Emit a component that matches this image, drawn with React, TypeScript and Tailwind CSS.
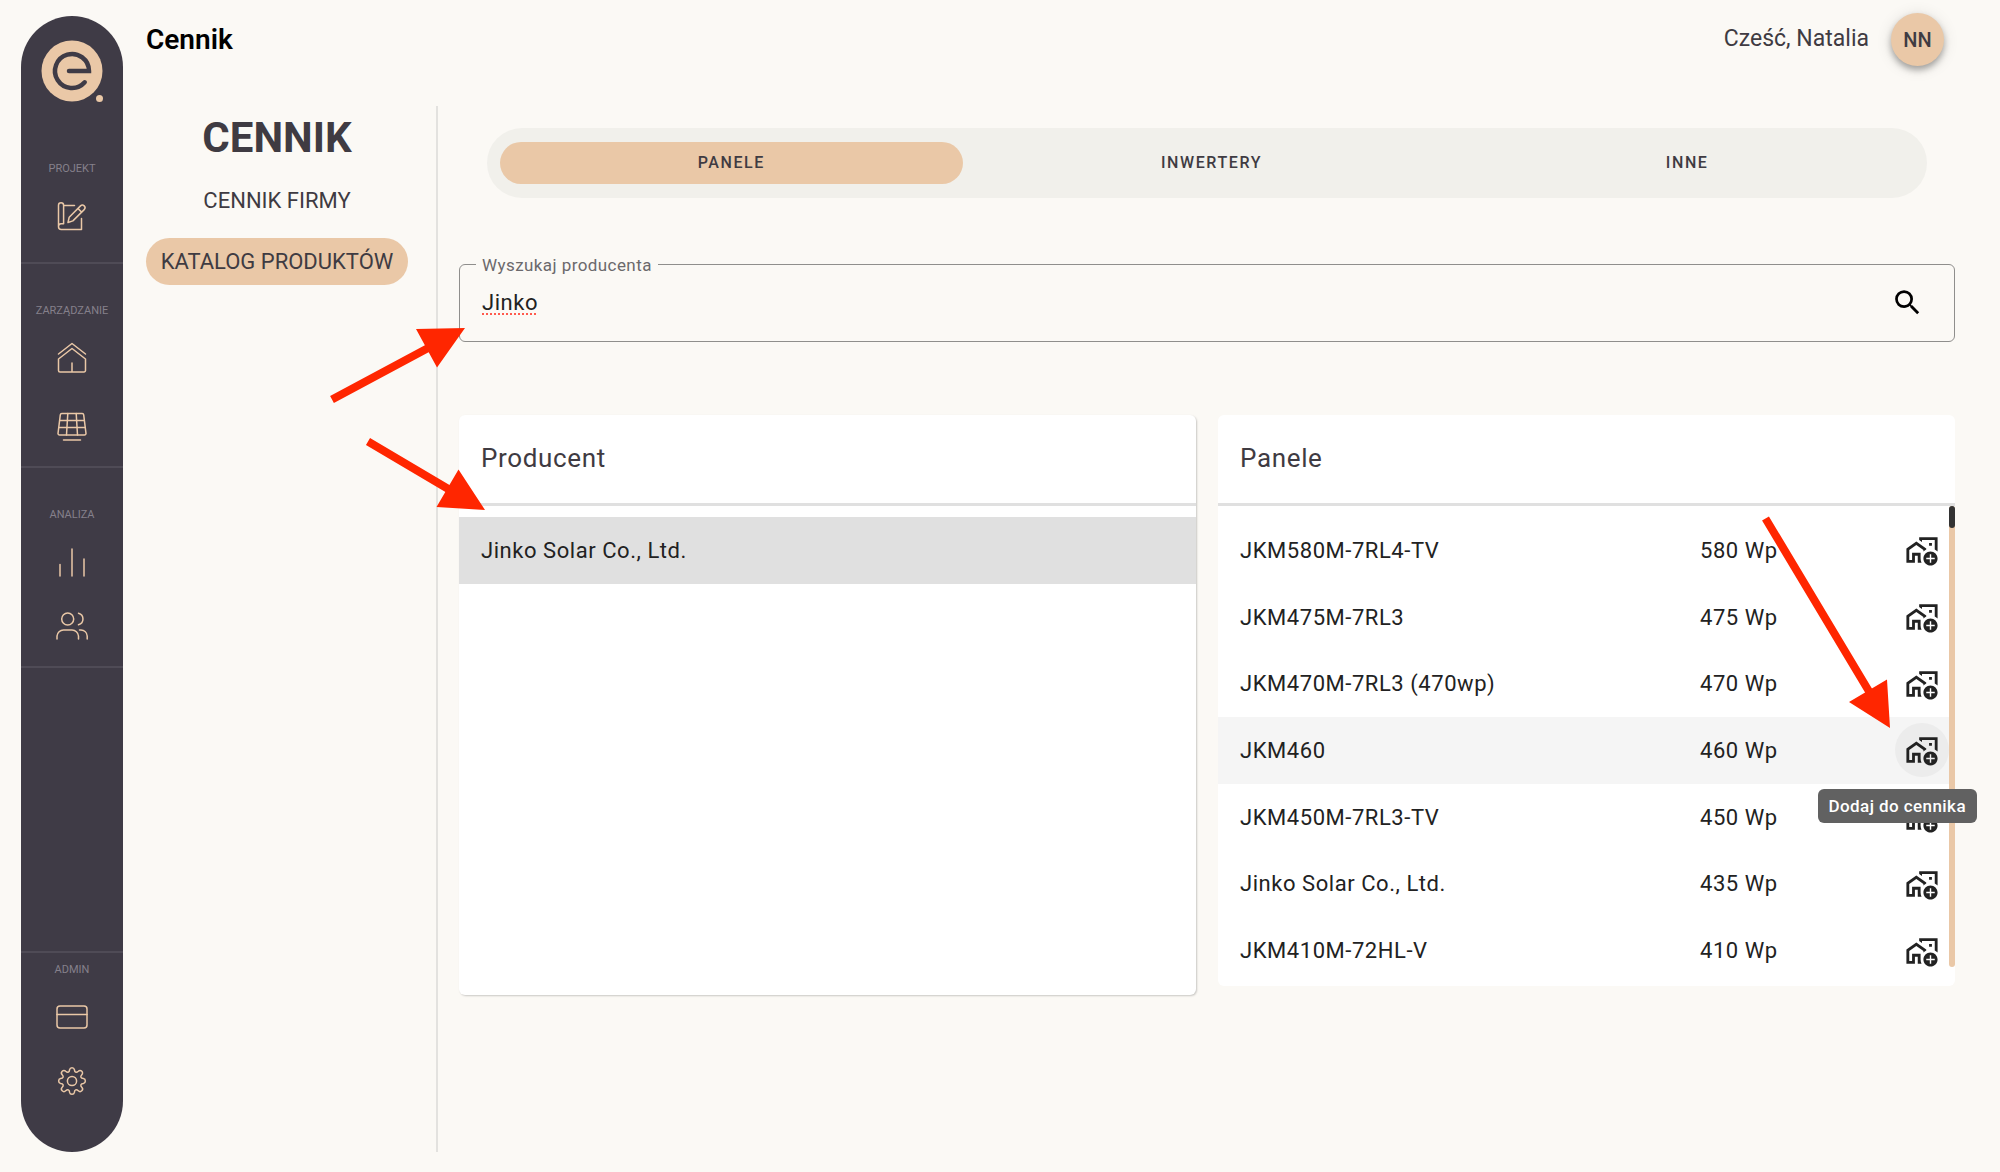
import { useState, type ReactNode } from "react";
import { MdOutlineAddHomeWork, MdSearch } from "react-icons/md";

const panels = [
  { name: "JKM580M-7RL4-TV", power: 580 },
  { name: "JKM475M-7RL3", power: 475 },
  { name: "JKM470M-7RL3 (470wp)", power: 470 },
  { name: "JKM460", power: 460, active: true },
  { name: "JKM450M-7RL3-TV", power: 450 },
  { name: "Jinko Solar Co., Ltd.", power: 435 },
  { name: "JKM410M-72HL-V", power: 410 },
];

function Logo() {
  return (
    <svg viewBox="0 0 62 62" className="size-[62px]" aria-hidden="true">
      <circle cx="31" cy="31" r="30.5" fill="#eac8a7" />
      <circle cx="58.5" cy="58.5" r="6" fill="#3f3b46" />
      <circle cx="58.5" cy="58.5" r="3.5" fill="#eac8a7" />
      <path
        d="M28 31H48A17 17 0 1 0 43.7 42.3"
        fill="none"
        stroke="#3f3b46"
        strokeWidth="4.5"
        strokeLinecap="round"
        strokeLinejoin="miter"
      />
    </svg>
  );
}

function Line({ children }: { children: ReactNode }) {
  return (
    <svg
      viewBox="0 0 32 32"
      className="size-8"
      fill="none"
      stroke="#eac8a7"
      strokeWidth="1.5"
      strokeLinecap="round"
      strokeLinejoin="round"
      aria-hidden="true"
    >
      {children}
    </svg>
  );
}

const ProjectIcon = () => (
  <Line>
    <path d="M8 5.5H18.5M25.5 18.5V29.5H5.2A2.7 2.7 0 0 1 2.5 26.8V5.2A2.4 2.4 0 0 1 7.6 5.2V23.7H5A2.6 2.6 0 0 0 2.6 26.3" />
    <path d="M12 22.5L13.2 17.2L24.5 5.9A2.6 2.6 0 0 1 28.2 9.6L16.9 20.9ZM22 8.5L25.6 12.1" />
  </Line>
);

const HomeIcon = () => (
  <Line>
    <path d="M2.5 12L16 1.5L29.5 12" />
    <path d="M2.5 17L16 6.5L29.5 17V28.5A1.5 1.5 0 0 1 28 30H4A1.5 1.5 0 0 1 2.5 28.5ZM16 21V30" />
  </Line>
);

const SolarIcon = () => (
  <Line>
    <path d="M5.8 3.5H26.2A1.5 1.5 0 0 1 27.7 4.8L30 23.5A1.5 1.5 0 0 1 28.5 25H3.5A1.5 1.5 0 0 1 2 23.5L4.3 4.8A1.5 1.5 0 0 1 5.8 3.5Z" />
    <path d="M3.8 10.5H28.2M2.8 17.5H29.2M11.8 3.5L10.5 25M20.2 3.5L21.5 25M7.5 30H24.5" />
  </Line>
);

const ChartIcon = () => (
  <Line>
    <path d="M4 18.5V30M16 3V30M28 13V30" />
  </Line>
);

const UsersIcon = () => (
  <Line>
    <circle cx="11.7" cy="9" r="6" />
    <path d="M1 29V26A6.5 6.5 0 0 1 7.5 20H16A6.5 6.5 0 0 1 22.5 26V29" />
    <path d="M22.5 3.2A6 6 0 0 1 22.5 14.8M23.5 20H25A6.5 6.5 0 0 1 31.2 26V29" />
  </Line>
);

const CardIcon = () => (
  <Line>
    <rect x="1" y="5" width="30" height="22" rx="3" />
    <path d="M1 13.5H31" />
  </Line>
);

const GearIcon = () => (
  <Line>
    <circle cx="16" cy="16" r="4.6" />
    <path d="M13.6 4.6A2.45 2.45 0 0 1 18.4 4.6C18.6 7.3 20.3 8 22.3 6.2A2.45 2.45 0 0 1 25.8 9.7C24 11.7 24.7 13.4 27.4 13.6A2.45 2.45 0 0 1 27.4 18.4C24.7 18.6 24 20.3 25.8 22.3A2.45 2.45 0 0 1 22.3 25.8C20.3 24 18.6 24.7 18.4 27.4A2.45 2.45 0 0 1 13.6 27.4C13.4 24.7 11.7 24 9.7 25.8A2.45 2.45 0 0 1 6.2 22.3C8 20.3 7.3 18.6 4.6 18.4A2.45 2.45 0 0 1 4.6 13.6C7.3 13.4 8 11.7 6.2 9.7A2.45 2.45 0 0 1 9.7 6.2C11.7 8 13.4 7.3 13.6 4.6Z" />
  </Line>
);

function NavLink({ label, children }: { label: string; children: ReactNode }) {
  return (
    <a href="#" aria-label={label} className="block">
      {children}
    </a>
  );
}

function NavTitle({ children }: { children: ReactNode }) {
  return <h2 className="mb-[23px] text-[11px] leading-4 text-[#85808b]">{children}</h2>;
}

function Sidebar() {
  return (
    <aside className="mt-4 mb-5 ml-[21px] flex w-[102px] shrink-0 flex-col rounded-full bg-[#3f3b46] pt-6">
      <a href="#" aria-label="Strona główna" className="mb-14 self-center">
        <Logo />
      </a>
      <nav className="flex flex-1 flex-col">
        <section className="flex flex-col items-center pt-[3px] pb-[30px]">
          <NavTitle>PROJEKT</NavTitle>
          <NavLink label="Projekt"><ProjectIcon /></NavLink>
        </section>
        <section className="flex flex-col items-center border-t-2 border-[#4f4b56] pt-[39px] pb-6">
          <NavTitle>ZARZĄDZANIE</NavTitle>
          <div className="flex flex-col gap-9">
            <NavLink label="Domy"><HomeIcon /></NavLink>
            <NavLink label="Panele"><SolarIcon /></NavLink>
          </div>
        </section>
        <section className="flex flex-col items-center border-y-2 border-[#4f4b56] pt-[39px] pb-6">
          <NavTitle>ANALIZA</NavTitle>
          <div className="flex flex-col gap-8">
            <NavLink label="Statystyki"><ChartIcon /></NavLink>
            <NavLink label="Klienci"><UsersIcon /></NavLink>
          </div>
        </section>
        <section className="mt-auto flex flex-col items-center border-t-2 border-[#4f4b56] pt-[9px] pb-[55px]">
          <NavTitle>ADMIN</NavTitle>
          <div className="flex flex-col gap-8">
            <NavLink label="Płatności"><CardIcon /></NavLink>
            <NavLink label="Ustawienia"><GearIcon /></NavLink>
          </div>
        </section>
      </nav>
    </aside>
  );
}

function Tabs() {
  const tab = "h-[42px] rounded-full text-base font-medium tracking-widest";
  return (
    <div
      role="tablist"
      className="mx-7 mt-[22px] grid grid-cols-[463fr_474fr_454fr] gap-3 rounded-full bg-[#f1f0eb] px-[13px] py-3.5"
    >
      <button role="tab" aria-selected="true" className={`${tab} bg-[#eac8a7]`}>PANELE</button>
      <button role="tab" aria-selected="false" className={tab}>INWERTERY</button>
      <button role="tab" aria-selected="false" className={tab}>INNE</button>
    </div>
  );
}

function SearchField() {
  const [query, setQuery] = useState("Jinko");
  return (
    <div className="relative mt-[66px] flex h-[78px] items-center rounded-md border border-[#8f8e8c] pr-[30px] pb-0.5 pl-[22px]">
      <label
        htmlFor="producer"
        className="absolute -top-3 left-4 bg-[#fbf9f5] px-1.5 text-[17px] leading-6 tracking-wide text-[#6b696c]"
      >
        Wyszukaj producenta
      </label>
      <input
        id="producer"
        value={query}
        spellCheck={false}
        onChange={(e) => setQuery(e.target.value)}
        className="h-10 min-w-0 flex-1 bg-transparent text-[22px] tracking-wide text-[#222] underline decoration-[#ff5a4d] decoration-dotted decoration-2 underline-offset-4 outline-none"
      />
      <button aria-label="Szukaj" className="text-black">
        <MdSearch className="size-[33px]" />
      </button>
    </div>
  );
}

function ProducerCard() {
  return (
    <section className="h-[580px] flex-1 rounded-md bg-white shadow-[1px_1px_2px_rgba(0,0,0,0.2)]">
      <h2 className="flex h-[91px] items-center border-b-3 border-[#e0e0e0] pb-0.5 pl-[22px] text-[26px] tracking-wide">
        Producent
      </h2>
      <ul className="pt-[11px]">
        <li>
          <button className="h-[67px] w-full bg-[#e0e0e0] pl-[22px] text-left text-[22px] tracking-wide text-[#222]">
            Jinko Solar Co., Ltd.
          </button>
        </li>
      </ul>
    </section>
  );
}

function PanelsCard() {
  return (
    <section className="h-[571px] flex-1 rounded-md bg-white">
      <h2 className="flex h-[91px] items-center border-b-3 border-[#e0e0e0] pb-0.5 pl-[22px] text-[26px] tracking-wide">
        Panele
      </h2>
      <div className="flex">
        <table className="mt-[11px] h-[467px] flex-1 text-[22px] tracking-wide text-[#222]">
          <tbody>
            {panels.map((p) => (
              <tr key={p.name} className={p.active ? "bg-[#f5f5f5]" : ""}>
                <td className="p-0 pl-[22px]">{p.name}</td>
                <td className="w-[195px] p-0">{p.power} Wp</td>
                <td className="w-[54px] p-0">
                  <div className="relative">
                    <button
                      aria-label={`Dodaj do cennika: ${p.name}`}
                      className={`flex size-[54px] items-center justify-center rounded-full ${p.active ? "bg-[#ececec]" : ""}`}
                    >
                      <MdOutlineAddHomeWork className="size-[34px]" />
                    </button>
                    {p.active && (
                      <span
                        role="tooltip"
                        className="absolute top-full -right-7 z-10 mt-3 rounded-md bg-[#616161] px-[11px] py-1.5 text-[17px] leading-[22px] font-medium tracking-wide whitespace-nowrap text-white"
                      >
                        Dodaj do cennika
                      </span>
                    )}
                  </div>
                </td>
              </tr>
            ))}
          </tbody>
        </table>
        <div className="h-[461px] w-1.5 rounded-full bg-[#eac8a7]">
          <div className="h-[22px] rounded-full bg-[#333]" />
        </div>
      </div>
    </section>
  );
}

function Arrows() {
  return (
    <svg
      viewBox="0 0 2000 1172"
      className="pointer-events-none absolute top-0 left-0 z-20 h-[1172px] w-[2000px] max-w-none"
      fill="#ff2600"
      stroke="#ff2600"
      aria-hidden="true"
    >
      <path d="M332 399.5L430 347M368 441.5L450 490M1765.5 518.5L1870 693" strokeWidth="8" />
      <path
        d="M465 328L416 329L437 367.5ZM485 510L458.5 469.5L436.5 507ZM1890 728L1887 679.5L1849 702Z"
        stroke="none"
      />
    </svg>
  );
}

export default function App() {
  return (
    <div className="relative flex min-h-screen overflow-hidden bg-[#fbf9f5] font-[Roboto,sans-serif] text-[#3f3b42]">
      <Sidebar />
      <div className="flex min-w-0 flex-1 flex-col pt-[13px] pb-5 pl-[23px]">
        <header className="flex h-[53px] items-center justify-between pr-14">
          <h1 className="text-[28px] font-semibold text-black">Cennik</h1>
          <div className="flex items-center gap-[22px]">
            <span className="text-[23px]">Cześć, Natalia</span>
            <button className="size-[53px] rounded-full bg-[#eac8a7] text-xl font-medium shadow-[0_4px_6px_rgba(0,0,0,0.3),0_2px_16px_rgba(0,0,0,0.12)]">
              NN
            </button>
          </div>
        </header>
        <div className="mt-10 flex flex-1">
          <nav className="flex w-[292px] shrink-0 flex-col items-center border-r-2 border-[#e3e2df] pt-[7px] pr-7 text-[22px]">
            <h2 className="text-[42px] leading-[50px] font-bold">CENNIK</h2>
            <a href="#" className="mt-[15px] leading-[46px]">CENNIK FIRMY</a>
            <a href="#" className="mt-3.5 w-full rounded-full bg-[#eac8a7] text-center leading-[47px]">
              KATALOG PRODUKTÓW
            </a>
          </nav>
          <main className="min-w-0 flex-1 pr-[45px] pl-[21px]">
            <Tabs />
            <SearchField />
            <div className="mt-[73px] flex items-start gap-[22px]">
              <ProducerCard />
              <PanelsCard />
            </div>
          </main>
        </div>
      </div>
      <Arrows />
    </div>
  );
}
